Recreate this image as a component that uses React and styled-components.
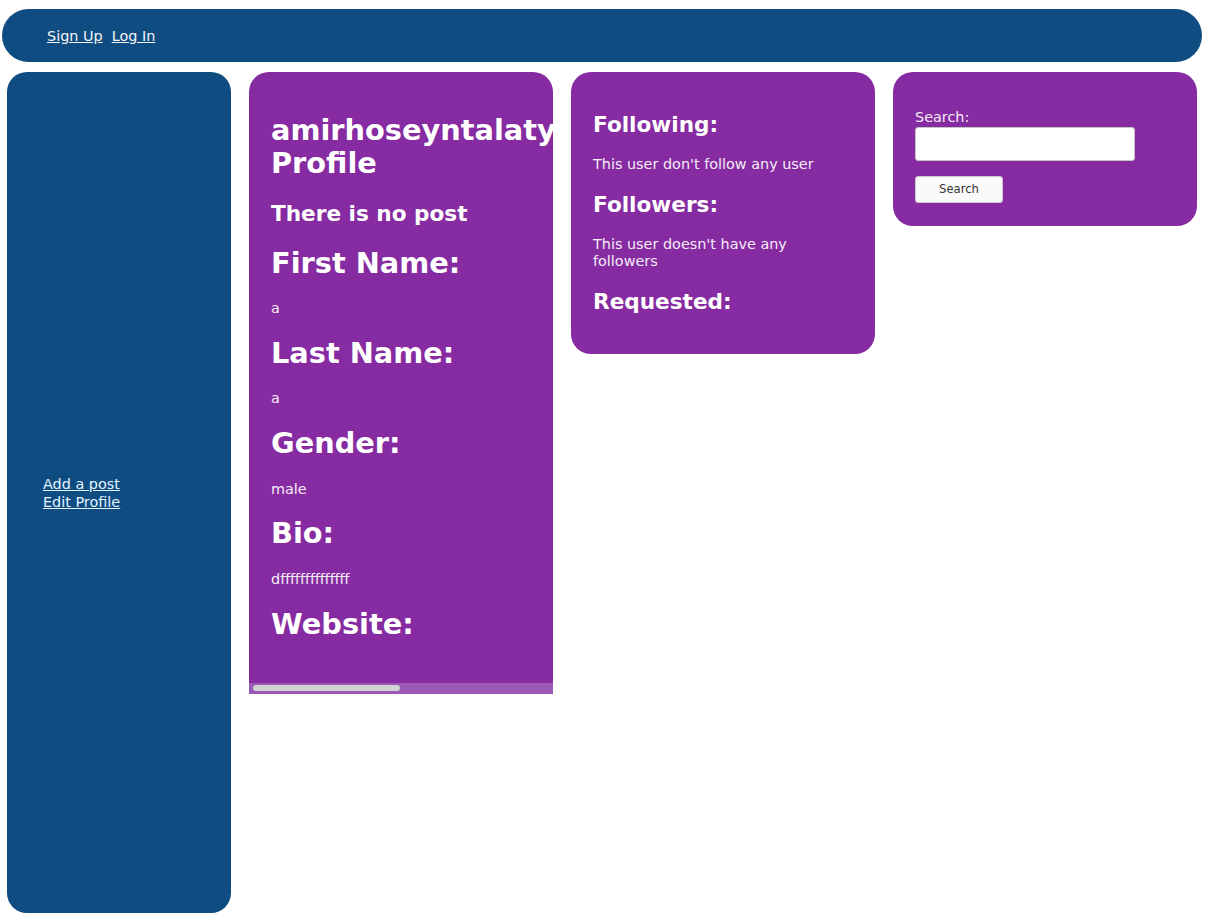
import React from "react";
import styled, { createGlobalStyle } from "styled-components";

const GlobalStyle = createGlobalStyle`
  html, body {
    margin: 0;
    padding: 0;
    background: #ffffff;
    font-family: "DejaVu Sans", "Liberation Sans", sans-serif;
  }
`;

const Page = styled.div`
  width: 1206px;
  height: 923px;
  box-sizing: border-box;
  padding: 9px 0 10px;
  display: flex;
  flex-direction: column;
  gap: 10px;
  font-size: 14.4px;
`;

const Header = styled.header`
  margin-left: 2px;
  width: 1200px;
  height: 53px;
  box-sizing: border-box;
  background: #0f4c81;
  border-radius: 27px;
  display: flex;
  align-items: center;
  gap: 9px;
  padding: 0 45px;
`;

const NavLink = styled.a`
  color: #f4f4f4;
  font-size: 14.4px;
  text-decoration: underline;
  cursor: pointer;
`;

const Row = styled.div`
  flex: 1;
  display: flex;
  align-items: flex-start;
  gap: 18px;
  padding-left: 7px;
`;

const Sidebar = styled.aside`
  width: 224px;
  align-self: stretch;
  background: #0f4c81;
  border-radius: 20px;
  display: flex;
  flex-direction: column;
  align-items: flex-start;
  justify-content: center;
  padding: 0 36px;
  box-sizing: border-box;
`;

const SideLink = styled.a`
  color: #e2f4ff;
  font-size: 14.4px;
  line-height: 18px;
  text-decoration: underline;
  cursor: pointer;
`;

const Card = styled.section`
  width: 304px;
  box-sizing: border-box;
  background: #862ba1;
  color: #ffffff;
  border-radius: ${({ $flatBottom }) => ($flatBottom ? "20px 20px 0 0" : "20px")};
  padding: ${({ $pad }) => $pad || "20.5px 22px"};
  overflow: hidden;
`;

const ProfileBody = styled.div`
  padding: 21.5px 22px 21.5px;
`;

const Title = styled.h2`
  margin: 20px 0;
  font-size: 28.8px;
  font-weight: bold;
  line-height: 33.5px;
`;

const SubTitle = styled.h3`
  margin: ${({ $gap }) => $gap || "19.2px"} 0;
  font-size: 21.6px;
  font-weight: bold;
  line-height: 25.1px;
`;

const Value = styled.p`
  margin: 19.2px 0;
  font-size: 14.4px;
  line-height: 16.8px;
  color: #f4ecf7;
`;

const ScrollTrack = styled.div`
  height: 11px;
  background: #9b59b6;
  display: flex;
  align-items: center;
  padding: 0 4px;
`;

const ScrollThumb = styled.div`
  width: 147px;
  height: 6px;
  border-radius: 3px;
  background: #d2d2d2;
`;

const SearchForm = styled.form`
  display: flex;
  flex-direction: column;
  align-items: flex-start;
  padding: 16px 0 3px;
`;

const Label = styled.label`
  font-size: 14.4px;
  line-height: 17px;
  color: #f4ecf7;
`;

const Input = styled.input`
  width: 220px;
  height: 34px;
  box-sizing: border-box;
  border: 1px solid #c4c4c4;
  border-radius: 3px;
  background: #ffffff;
  margin: 1px 0 15px;
`;

const Button = styled.button`
  width: 88px;
  height: 27px;
  box-sizing: border-box;
  border: 1px solid #c8c8c8;
  border-radius: 3px;
  background: #fafafa;
  color: #333333;
  font-family: "DejaVu Sans", "Liberation Sans", sans-serif;
  font-size: 11.6px;
  cursor: pointer;
`;

const profileFields = [
  ["First Name:", "a"],
  ["Last Name:", "a"],
  ["Gender:", "male"],
  ["Bio:", "dffffffffffffff"],
  ["Website:", null],
];

export default function App() {
  return (
    <>
      <GlobalStyle />
      <Page>
        <Header>
          <NavLink>Sign Up</NavLink>
          <NavLink>Log In</NavLink>
        </Header>
        <Row>
          <Sidebar>
            <SideLink>Add a post</SideLink>
            <SideLink>Edit Profile</SideLink>
          </Sidebar>

          <Card $flatBottom $pad="0">
            <ProfileBody>
              <Title>amirhoseyntalaty Profile</Title>
              <SubTitle $gap="20.5px">There is no post</SubTitle>
              {profileFields.map(([label, value]) => (
                <React.Fragment key={label}>
                  <Title>{label}</Title>
                  {value && <Value>{value}</Value>}
                </React.Fragment>
              ))}
            </ProfileBody>
            <ScrollTrack>
              <ScrollThumb />
            </ScrollTrack>
          </Card>

          <Card>
            <SubTitle>Following:</SubTitle>
            <Value>This user don't follow any user</Value>
            <SubTitle>Followers:</SubTitle>
            <Value>This user doesn't have any followers</Value>
            <SubTitle>Requested:</SubTitle>
          </Card>

          <Card>
            <SearchForm onSubmit={(e) => e.preventDefault()}>
              <Label htmlFor="search">Search:</Label>
              <Input id="search" type="text" />
              <Button type="submit">Search</Button>
            </SearchForm>
          </Card>
        </Row>
      </Page>
    </>
  );
}
